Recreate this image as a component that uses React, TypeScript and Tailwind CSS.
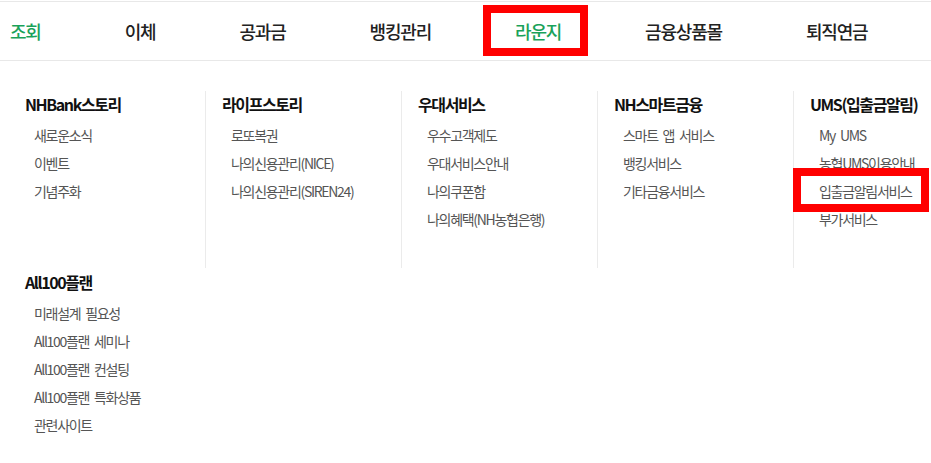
import React from "react";

const navItems = ["조회", "이체", "공과금", "뱅킹관리", "라운지", "금융상품몰", "퇴직연금"];

type MenuGroup = {
  title: string;
  items: string[];
};

const firstRow: MenuGroup[] = [
  { title: "NHBank스토리", items: ["새로운소식", "이벤트", "기념주화"] },
  { title: "라이프스토리", items: ["로또복권", "나의신용관리(NICE)", "나의신용관리(SIREN24)"] },
  { title: "우대서비스", items: ["우수고객제도", "우대서비스안내", "나의쿠폰함", "나의혜택(NH농협은행)"] },
  { title: "NH스마트금융", items: ["스마트 앱 서비스", "뱅킹서비스", "기타금융서비스"] },
  { title: "UMS(입출금알림)", items: ["My UMS", "농협UMS이용안내", "입출금알림서비스", "부가서비스"] },
];

const secondRow: MenuGroup[] = [
  {
    title: "All100플랜",
    items: ["미래설계 필요성", "All100플랜 세미나", "All100플랜 컨설팅", "All100플랜 특화상품", "관련사이트"],
  },
];

function Column({ group, first, pt }: { group: MenuGroup; first: boolean; pt: string }) {
  return (
    <div
      className={
        first
          ? `w-[196px] shrink-0 pl-4 pb-[35px] ${pt}`
          : `w-[196px] shrink-0 pl-4 pb-[35px] border-l border-[#ebebeb] ${pt}`
      }
    >
      <h3 className="h-[26px] leading-[26px] text-[16px] font-bold tracking-[-1.4px] text-[#111] whitespace-nowrap">
        {group.title}
      </h3>
      <ul className="mt-1">
        {group.items.map((item) => (
          <li
            key={item}
            className="relative h-[28px] leading-[28px] pl-[9px] text-[14px] tracking-[-1.3px] text-[#555] whitespace-nowrap [word-spacing:3px]"
          >
            {item}
            {item === "입출금알림서비스" && (
              <span className="absolute left-[-17px] top-[-9px] w-[136px] h-[44px] border-[8px] border-[#ff0000]" />
            )}
          </li>
        ))}
      </ul>
    </div>
  );
}

export default function App() {
  return (
    <div
      className="w-[931px] h-[463px] overflow-hidden bg-white"
      style={{ fontFamily: '"Noto Sans CJK KR", "Noto Sans", sans-serif' }}
    >
      {/* top menu bar */}
      <nav className="mt-px flex h-[60px] gap-[84px] border-y border-[#e8e8e8] pl-[10px]">
        {navItems.map((name, i) => (
          <div
            key={name}
            className={
              i === 0 || i === 4
                ? "relative flex items-center text-[18px] font-medium tracking-[-1.2px] text-[#1aa25a]"
                : "relative flex items-center text-[18px] font-medium tracking-[-1.2px] text-[#222]"
            }
          >
            {name}
            {name === "라운지" && (
              <span className="absolute left-[-32px] top-[3px] w-[105px] h-[51px] border-[8px] border-[#ff0000]" />
            )}
          </div>
        ))}
      </nav>

      {/* mega menu */}
      <div className="pl-[9px]">
        <div className="flex">
          {firstRow.map((g, i) => (
            <Column key={g.title} group={g} first={i === 0} pt="mt-[30px]" />
          ))}
        </div>
        <div className="flex">
          {secondRow.map((g, i) => (
            <Column key={g.title} group={g} first={i === 0} pt="pt-px" />
          ))}
        </div>
      </div>
    </div>
  );
}
